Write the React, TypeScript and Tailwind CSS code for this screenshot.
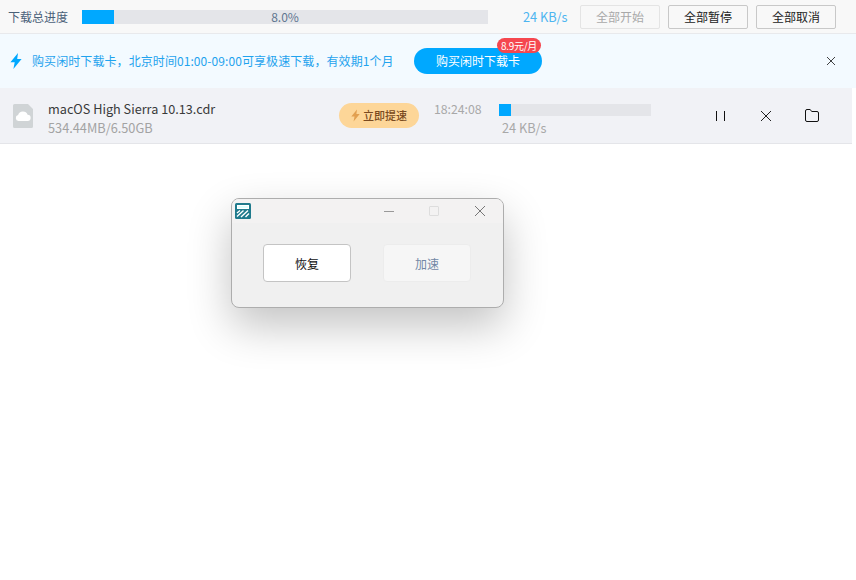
import { X } from 'lucide-react'

const font = { fontFamily: '"Noto Sans CJK SC", sans-serif' }

function Bolt({ className }: { className?: string }) {
  return (
    <svg viewBox="0 0 12 16" className={className} fill="currentColor">
      <path d="M8 0 0.4 9.200h4.300L3.400 16l8.200-10H7.200L8 0z" />
    </svg>
  )
}

function FileIcon() {
  return (
    <svg viewBox="0 0 20 24" className="w-[20px] h-[24px]">
      <path d="M1.500 0H15l5 5v17.500a1.500 1.500 0 0 1-1.500 1.500h-17A1.500 1.500 0 0 1 0 22.500V1.500A1.500 1.500 0 0 1 1.500 0z" fill="#d0d4d6" />
      <path d="M5.500 17a3 3 0 0 1-.4-5.900 5 5 0 0 1 9.500-.3A3.100 3.100 0 0 1 14.500 17z" fill="#fff" />
    </svg>
  )
}

function AppLogo() {
  return (
    <svg viewBox="0 0 16 16" className="w-[16px] h-[16px]">
      <rect width="16" height="16" rx="1.500" fill="#1f7a8c" />
      <rect x="2.500" y="2.500" width="11" height="3" fill="#dff" stroke="#fff" strokeWidth="1" />
      <path d="M2 10 5 7.500M2 13.500l6.500-6M6 14l7-6.500M10.500 14l3.500-3.500" stroke="#fff" strokeWidth="1.400" fill="none" />
    </svg>
  )
}

function PauseLines() {
  return (
    <svg viewBox="0 0 9 10" className="w-[9px] h-[10px] text-[#111]" stroke="currentColor" strokeWidth="1">
      <path d="M.5 0v10M8.500 0v10" />
    </svg>
  )
}

function Cross({ className }: { className?: string }) {
  return (
    <svg viewBox="0 0 10 10" className={className} stroke="currentColor" strokeWidth="1" fill="none">
      <path d="M0 0l10 10M10 0 0 10" />
    </svg>
  )
}

function FolderLine() {
  return (
    <svg viewBox="0 0 14 13" className="w-[14px] h-[13px] text-[#111]" stroke="currentColor" strokeWidth="1" fill="none">
      <path d="M.500 2A1.500 1.500 0 0 1 2 .500h3.200l1.500 2H12A1.500 1.500 0 0 1 13.500 4v7A1.500 1.500 0 0 1 12 12.500H2A1.500 1.500 0 0 1 .500 11z" />
    </svg>
  )
}

export default function App() {
  return (
    <div className="relative w-[856px] h-[580px] bg-white overflow-hidden text-[12px]" style={font}>
      <header className="h-[34px] bg-[#f8f8f8] border-b border-[#e8e9ec] flex items-center">
        <span className="ml-[8px] w-[74px] text-[#4a6078]">下载总进度</span>
        <div className="relative w-[406px] h-[14px] bg-[#e4e5e9]">
          <div className="h-full w-[32px] bg-[#00a8ff]" />
          <span className="absolute inset-0 flex items-center justify-center text-[#5f7690] leading-none">8.0%</span>
        </div>
        <span className="ml-[35px] w-[45px] text-[12.750px] text-[#4db5f0] whitespace-nowrap">24 KB/s</span>
        <button className="ml-[12px] w-[80px] h-[24px] rounded-[2px] border border-[#e4e4e4] text-[#a9a9a9]">全部开始</button>
        <button className="ml-[8px] w-[80px] h-[24px] rounded-[2px] border border-[#c8c8c8] text-[#222]">全部暂停</button>
        <button className="ml-[8px] w-[80px] h-[24px] rounded-[2px] border border-[#c8c8c8] text-[#222]">全部取消</button>
      </header>

      <div className="h-[54px] bg-[#f3faff] flex items-center">
        <Bolt className="ml-[10px] w-[12px] h-[16px] text-[#00a8ff]" />
        <span className="ml-[10px] w-[382px] whitespace-nowrap tracking-[0.08px] text-[#1fa3ee]">购买闲时下载卡，北京时间01:00-09:00可享极速下载，有效期1个月</span>
        <div className="relative">
          <button className="w-[128px] h-[26px] rounded-full bg-[#00a8ff] text-white">购买闲时下载卡</button>
          <span className="absolute right-[1px] top-[-10px] w-[44px] h-[15px] text-center rounded-full bg-[#f5474f] text-white text-[10px] tracking-[-0.3px] leading-[15px] whitespace-nowrap">8.9元/月</span>
        </div>
        <Cross className="ml-[285px] w-[8px] h-[8px] text-[#111]" />
      </div>

      <div className="w-[852px] h-[56px] bg-[#f1f2f6] border-b border-[#e4e5e9] flex items-center">
        <div className="ml-[13px]"><FileIcon /></div>
        <div className="ml-[15px] w-[291px] mt-[3px]">
          <div className="text-[12.700px] leading-[20px] text-[#3a3a3a]">macOS High Sierra 10.13.cdr</div>
          <div className="text-[12.750px] leading-[17px] text-[#a3a3a3]">534.44MB/6.50GB</div>
        </div>
        <div className="w-[80px] h-[25px] rounded-full bg-[#fdd698] flex items-center justify-center gap-[3px] text-[#7a4a20] text-[11px] font-medium">
          <Bolt className="w-[9px] h-[13px] text-[#e2a050]" />
          立即提速
        </div>
        <div className="ml-[15px] w-[65px] text-[12.250px] text-[#a8a8a8] self-start mt-[12px]">18:24:08</div>
        <div className="w-[152px] mt-[8px]">
          <div className="h-[12px] bg-[#e4e5e9]">
            <div className="h-full w-[12px] bg-[#00a8ff]" />
          </div>
          <div className="ml-[3px] mt-[3px] text-[12.750px] leading-[17px] text-[#a8a8a8] whitespace-nowrap">24 KB/s</div>
        </div>
        <div className="ml-[65px]"><PauseLines /></div>
        <Cross className="ml-[36px] w-[10px] h-[10px] text-[#222]" />
        <div className="ml-[34px]"><FolderLine /></div>
      </div>

      <div className="absolute left-[231px] top-[198px] w-[273px] h-[110px] rounded-[8px] border border-[#adadad] bg-[#f0f0f0] shadow-[0_18px_44px_rgba(0,0,0,0.24)] overflow-hidden">
        <div className="h-[24px] bg-[#f3f2f2] flex items-center pl-[3px]">
          <AppLogo />
          <div className="ml-[133px] w-[10px] h-px mt-[1px] bg-[#999]" />
          <div className="ml-[35px] w-[10px] h-[10px] rounded-[1px] border border-[#dddddd]" />
          <Cross className="ml-[36px] w-[10px] h-[10px] text-[#777]" />
        </div>
        <div className="flex pl-[31px] pt-[21px] gap-[32px]">
          <button className="w-[88px] h-[38px] pt-px rounded-[4px] border border-[#c4c4c4] bg-white text-[#111]">恢复</button>
          <button className="w-[88px] h-[38px] pt-px rounded-[4px] border border-[#ececec] bg-[#f6f6f6] text-[#7287a5]">加速</button>
        </div>
      </div>
    </div>
  )
}
